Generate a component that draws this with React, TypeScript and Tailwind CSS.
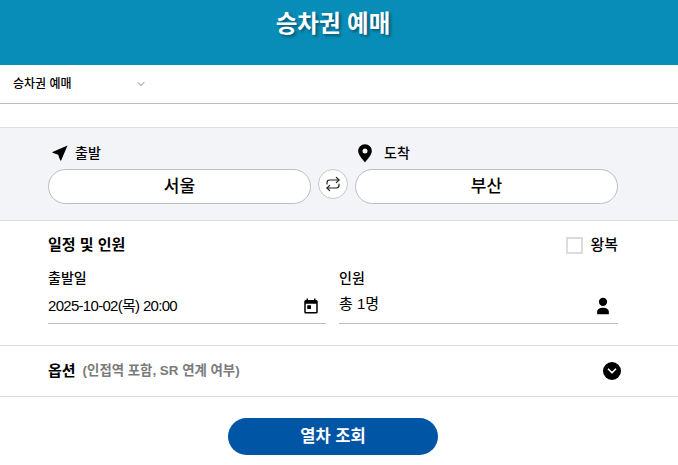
import { ChevronDown } from "lucide-react";

const SwapIcon = () => (
  <svg width="16" height="16" viewBox="0 0 24 24" fill="none" stroke="#222" strokeWidth="1.8" strokeLinecap="round" strokeLinejoin="round">
    <path d="M17 2l4 4-4 4" />
    <path d="M3 12v-2a4 4 0 0 1 4-4h14" />
    <path d="M7 22l-4-4 4-4" />
    <path d="M21 12v2a4 4 0 0 1-4 4H3" />
  </svg>
);

const App = () => {
  return (
    <div className="w-[678px] h-[465px] overflow-hidden bg-white text-black font-['Liberation_Sans','Noto_Sans_CJK_KR',sans-serif]">
      <header className="h-[65px] bg-[#078db8] flex justify-center pt-[8px] pr-[12px]">
        <h1 className="text-[23.5px] leading-[32px] font-bold text-white [text-shadow:2px_2px_3px_rgba(0,0,0,0.4)]">
          승차권 예매
        </h1>
      </header>

      <div className="h-[39px] border-b border-[#bdbdbd] flex items-center pl-[13px] pb-[1px]">
        <span className="w-[122px] text-[12px] font-medium">승차권 예매</span>
        <ChevronDown size={12} color="#b8b8c2" strokeWidth={2.2} />
      </div>

      <div className="h-[23px]" />

      <section className="h-[94px] bg-[#f3f4f8] border-y border-[#dedede] px-[48px] pt-[12px]">
        <div className="flex h-[29px]">
          <div className="w-[307px] flex items-center pl-[3px] gap-[6px] pb-[3px]">
            <svg width="18" height="18" viewBox="0 0 24 24" fill="#000">
              <path d="M22 2 2 10.500v1.200l7.600 2.700 2.700 7.600h1.200z" />
            </svg>
            <span className="text-[14px] font-medium">출발</span>
          </div>
          <div className="flex items-center gap-[9px] pb-[3px]">
            <svg width="20" height="20" viewBox="0 0 24 24" fill="#000">
              <path fillRule="evenodd" d="M12 1.500c-4.600 0-8.200 3.600-8.200 8.100 0 5.600 8.200 13.400 8.200 13.400s8.200-7.800 8.200-13.400c0-4.500-3.600-8.100-8.200-8.100zm0 11a3 3 0 1 1 0-6 3 3 0 0 1 0 6z" />
            </svg>
            <span className="text-[14px] font-medium">도착</span>
          </div>
        </div>
        <div className="flex items-center gap-[7px]">
          <div className="w-[263px] h-[35px] rounded-full bg-white border border-[#bdbdc2] flex items-center justify-center text-[17px] font-medium">서울</div>
          <div className="w-[30px] h-[30px] rounded-full bg-white border border-[#c8c8c8] flex items-center justify-center -mt-[5px]"><SwapIcon /></div>
          <div className="w-[263px] h-[35px] rounded-full bg-white border border-[#bdbdc2] flex items-center justify-center text-[17px] font-medium">부산</div>
        </div>
      </section>

      <section className="h-[125px] border-b border-[#dedede] pl-[48px] pr-[60px]">
        <div className="h-[47px] flex items-center justify-between pt-[2px]">
          <span className="text-[15px] font-bold">일정 및 인원</span>
          <label className="flex items-center gap-[7px]">
            <span className="w-[17px] h-[17px] bg-white border-2 border-[#dcdcdc]" />
            <span className="text-[15px] font-medium">왕복</span>
          </label>
        </div>
        <div className="flex gap-[13px]">
          <div className="w-[278px]">
            <div className="text-[14px] leading-[20px] font-medium">출발일</div>
            <div className="h-[36px] border-b border-[#bdbdbd] flex items-center justify-between pr-[6px] pt-[1px]">
              <span className="text-[15px] tracking-[-0.7px]">2025-10-02(목) 20:00</span>
              <svg width="18" height="18" viewBox="0 0 24 24" fill="#000">
                <path d="M19 4h-1V2h-2v2H8V2H6v2H5a2 2 0 0 0-2 2v14a2 2 0 0 0 2 2h14a2 2 0 0 0 2-2V6a2 2 0 0 0-2-2zm0 16H5V9h14zM7 11h5v5H7z" />
              </svg>
            </div>
          </div>
          <div className="w-[279px]">
            <div className="text-[14px] leading-[20px] font-medium">인원</div>
            <div className="h-[36px] border-b border-[#bdbdbd] flex items-center justify-between pr-[5px]">
              <span className="text-[15px] -mt-[2px]">총 1명</span>
              <svg className="mt-[1px]" width="20" height="20" viewBox="0 0 24 24" fill="#000">
                <path d="M12 12a5 5 0 1 0 0-10 5 5 0 0 0 0 10zm0 2c-3.500 0-7 1.800-7 4.500V22h14v-3.500c0-2.700-3.500-4.500-7-4.500z" />
              </svg>
            </div>
          </div>
        </div>
      </section>

      <section className="h-[51px] border-b border-[#dedede] pl-[48px] pr-[60px] flex items-center justify-between">
        <div className="flex items-center gap-[7px]">
          <span className="text-[15px] font-bold">옵션</span>
          <span className="text-[13.4px] font-bold text-[#7b7b7b]">(인접역 포함, SR 연계 여부)</span>
        </div>
        <div className="w-[18px] h-[18px] mr-[-3px] rounded-full bg-black flex items-center justify-center">
          <ChevronDown size={14} color="#fff" strokeWidth={3} />
        </div>
      </section>

      <div className="flex justify-center pt-[21px] pr-[12px]">
        <button className="w-[210px] h-[37px] rounded-full bg-[#0055a5] text-white text-[16.5px] font-bold">
          열차 조회
        </button>
      </div>
    </div>
  );
};

export default App;
